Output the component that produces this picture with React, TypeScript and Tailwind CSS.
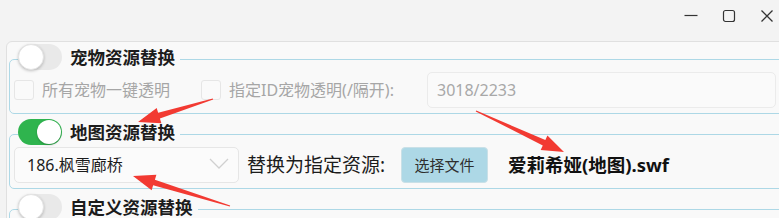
import React from 'react'

const FONT = { fontFamily: '"Noto Sans", "Noto Sans CJK SC", sans-serif' }

type Pt = [number, number]

// tapered red annotation arrow, tail -> tip
function arrowPoints(tail: Pt, tip: Pt) {
  const [x1, y1] = tail
  const [x2, y2] = tip
  const dx = x2 - x1
  const dy = y2 - y1
  const len = Math.hypot(dx, dy)
  const ux = dx / len
  const uy = dy / len
  const nx = -uy
  const ny = ux
  const headLen = 22
  const headHalf = 8
  const neckHalf = 3
  const bx = x2 - ux * headLen
  const by = y2 - uy * headLen
  const pts: Pt[] = [
    [x1 + nx * 0.6, y1 + ny * 0.6],
    [bx + nx * neckHalf, by + ny * neckHalf],
    [bx + nx * headHalf, by + ny * headHalf],
    [x2, y2],
    [bx - nx * headHalf, by - ny * headHalf],
    [bx - nx * neckHalf, by - ny * neckHalf],
    [x1 - nx * 0.6, y1 - ny * 0.6],
  ]
  return pts.map((p) => p.join(',')).join(' ')
}

function Toggle({ on }: { on: boolean }) {
  if (on) {
    return (
      <div className="w-[44px] h-[26px] rounded-full bg-[#2fb44e] flex items-center justify-end pr-[1px]">
        <div className="w-[24px] h-[24px] rounded-full bg-white shadow-[0_1px_2px_rgba(0,0,0,0.25)]" />
      </div>
    )
  }
  return (
    <div className="w-[44px] h-[26px] rounded-full bg-[#e9e9e9] flex items-center">
      <div className="w-[26px] h-[26px] rounded-full bg-white border border-[#e4e4e4] shadow-[0_1px_3px_rgba(0,0,0,0.22)]" />
    </div>
  )
}

function Group({ on, title, children }: { on: boolean; title: string; children?: React.ReactNode }) {
  return (
    <fieldset className="border border-[#add8e6] rounded-[5px] mt-[5px] first:mt-0">
      <legend className="ml-[8px] pr-[5px] pb-[5px] flex items-center gap-[8px]">
        <Toggle on={on} />
        <span className="text-[17.5px] font-bold leading-[26px] text-[#1c1c1c]">{title}</span>
      </legend>
      {children && <div className="-mt-[3px] pb-[5px] pl-[4px] flex items-center">{children}</div>}
    </fieldset>
  )
}

function Checkbox() {
  return <div className="w-[20px] h-[20px] rounded-[3px] border border-[#e6e6e6] bg-[#fafafa]" />
}

export default function App() {
  return (
    <div className="relative w-[779px] h-[218px] overflow-hidden bg-[#f3f3f3]" style={FONT}>
      {/* title bar */}
      <div className="h-[41px] flex items-start justify-end pt-[9px] pr-[5px] text-[#333]">
        <svg width="14" height="14" viewBox="0 0 14 14" className="mr-[24px]">
          <line x1="0.5" y1="6.5" x2="13.5" y2="6.5" stroke="currentColor" strokeWidth="1.2" />
        </svg>
        <svg width="14" height="14" viewBox="0 0 14 14" className="mr-[24px]">
          <rect x="1.5" y="1.5" width="11" height="11" rx="2" fill="none" stroke="currentColor" strokeWidth="1.2" />
        </svg>
        <svg width="14" height="14" viewBox="0 0 14 14">
          <path d="M1.5 1.5 L12.5 12.5 M12.5 1.5 L1.5 12.5" stroke="currentColor" strokeWidth="1.3" />
        </svg>
      </div>

      {/* content panel */}
      <div className="ml-[6px] w-[800px] h-[200px] border border-[#e0e0e0] rounded-tl-[6px] bg-[#f9f9f9] pl-[2px] pt-[2px]">
        <Group on={false} title="宠物资源替换">
          <Checkbox />
          <span className="w-[167px] pl-[8px] text-[16px] leading-[20px] text-[#a6a6a6]">所有宠物一键透明</span>
          <Checkbox />
          <span className="w-[206px] pl-[8px] text-[16px] leading-[20px] text-[#a6a6a6]">指定ID宠物透明(/隔开):</span>
          <div className="w-[349px] h-[36px] rounded-[5px] border border-[#ebebeb] bg-[#fafafa] flex items-center pl-[9px] text-[16px] text-[#a8a8a8]">
            3018/2233
          </div>
        </Group>

        <Group on={true} title="地图资源替换">
          <div className="w-[225px] h-[36px] rounded-[5px] border border-[#e6e6e6] bg-[#fbfbfb] flex items-center justify-between pl-[12px] pr-[9px]">
            <span className="text-[16px] leading-[20px] text-[#1c1c1c]">186.枫雪廊桥</span>
            <svg width="20" height="12" viewBox="0 0 20 12" className="-mt-[2px]">
              <path d="M1 1 L10 10 L19 1" fill="none" stroke="#d0d0d0" strokeWidth="1.3" />
            </svg>
          </div>
          <span className="ml-[8px] w-[154px] text-[19px] leading-[22px] text-[#1c1c1c]">替换为指定资源:</span>
          <div className="w-[87px] h-[36px] rounded-[4px] border border-[#c9e0e7] bg-[#add8e6] flex items-center justify-center text-[15px] text-[#2e2e2e]">
            选择文件
          </div>
          <span className="ml-[20px] text-[18.5px] font-bold leading-[22px] text-[#111]">爱莉希娅(地图).swf</span>
        </Group>

        <Group on={false} title="自定义资源替换">
          <div className="h-[30px]" />
        </Group>
      </div>

      {/* red annotation arrows */}
      <svg className="absolute inset-0 pointer-events-none" width="779" height="218">
        <polygon points={arrowPoints([213, 99], [138, 122])} fill="#f23a32" />
        <polygon points={arrowPoints([476, 111], [564, 152])} fill="#f23a32" />
        <polygon points={arrowPoints([230, 206], [133, 176])} fill="#f23a32" />
      </svg>
    </div>
  )
}
